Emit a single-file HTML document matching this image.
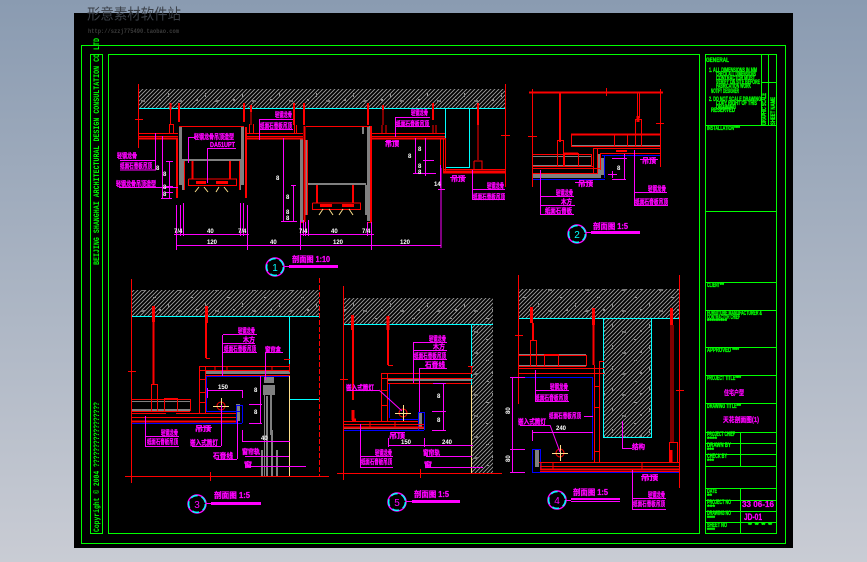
<!DOCTYPE html>
<html lang="zh"><head><meta charset="utf-8"><title>CAD</title>
<style>
html,body{margin:0;padding:0;width:867px;height:562px;overflow:hidden;background:linear-gradient(#8a9bb1,#c9ccd4)}
svg{display:block;position:absolute;left:0;top:0}
text{font-family:"Liberation Sans","Noto Sans CJK SC",sans-serif}
.m{fill:#f0f;stroke:#f0f;stroke-width:.3px;font-size:7px;font-weight:700}
.w{fill:#fff;font-size:6px;font-weight:700}
.g{fill:#0f0;stroke:#0f0;stroke-width:.3px;font-size:6px;font-weight:700}
.t{fill:#f0f;stroke:#f0f;stroke-width:.3px;font-size:8px;font-weight:700}
.s{fill:#0f0;font-family:"Liberation Mono",monospace;font-size:8px;font-weight:700}
.p{fill:#f0f;stroke:#f0f;stroke-width:.25px;font-weight:700}
path,rect,line{shape-rendering:crispEdges}
</style></head><body>
<svg width="867" height="562" viewBox="0 0 867 562" xmlns="http://www.w3.org/2000/svg">
<defs>
<pattern id="h" width="4" height="4" patternUnits="userSpaceOnUse"><rect width="4" height="4" fill="#000"/><path d="M0 4L4 0M-1 1L1 -1M3 5L5 3" stroke="#8a8a8a" stroke-width="1" fill="none"/></pattern>
<pattern id="sp" width="37" height="21" patternUnits="userSpaceOnUse"><rect x="5" y="3" width="3" height="1" fill="#8a8a8a"/><rect x="20" y="9" width="1" height="4" fill="#8a8a8a"/><rect x="30" y="16" width="4" height="2" fill="#777"/><rect x="11" y="15" width="2" height="2" fill="#8a8a8a"/></pattern>
</defs>
<rect x="74" y="13" width="719" height="535" fill="#000"/>

<!-- hatches -->
<g>
<rect x="139" y="89" width="366" height="19" fill="url(#h)"/><rect x="139" y="89" width="366" height="19" fill="url(#sp)"/>
<rect x="132" y="290" width="187" height="26" fill="url(#h)"/><rect x="132" y="290" width="187" height="26" fill="url(#sp)"/>
<rect x="344" y="298" width="149" height="26" fill="url(#h)"/><rect x="344" y="298" width="149" height="26" fill="url(#sp)"/>
<rect x="472" y="324" width="21" height="149" fill="url(#h)"/><rect x="472" y="324" width="21" height="149" fill="url(#sp)"/>
<rect x="519" y="289" width="160" height="29" fill="url(#h)"/><rect x="519" y="289" width="160" height="29" fill="url(#sp)"/>
<rect x="604" y="318" width="47" height="119" fill="url(#h)"/><rect x="604" y="318" width="47" height="119" fill="url(#sp)"/>
</g>

<!-- green frames -->
<g fill="none" stroke="#0f0" stroke-width="1">
<path d="M81.5 45.5H785.5V543.5H81.5Z"/>
<path d="M90.5 54.5H102.5V533.5H90.5Z"/>
<path d="M108.5 54.5H699.5V533.5H108.5Z"/>
<path d="M705.5 54.5H776.5V533.5H705.5Z"/>
<path d="M761.5 54.5V125M768.5 54.5V125M761.5 82.5H776.5M705.5 125.5H776.5M705.5 211.5H776.5M705.5 282.5H776.5M705.5 310.5H776.5M705.5 347.5H776.5M705.5 375.5H776.5M705.5 403.5H776.5M705.5 432.5H776.5M705.5 443.5H776.5M705.5 454.5H776.5M705.5 466.5H776.5M705.5 488.5H776.5M705.5 500.5H776.5M705.5 511.5H776.5M705.5 522.5H776.5M740.5 432V466M740.5 488V533"/>
</g>

<!-- grey parts -->
<g fill="#808080">
<rect x="179" y="127" width="3" height="58"/><rect x="182" y="160" width="2" height="30"/><rect x="182" y="159" width="61" height="2"/><rect x="241" y="127" width="3" height="58"/><rect x="239" y="160" width="2" height="30"/><rect x="245" y="138" width="2" height="60"/>
<rect x="300" y="138" width="3" height="84"/><rect x="305" y="140" width="2" height="75"/><rect x="306" y="183" width="60" height="2"/><rect x="365" y="185" width="2" height="30"/><rect x="367" y="126" width="3" height="95"/><rect x="362" y="126" width="2" height="8"/>
<rect x="533" y="174" width="68" height="4"/><rect x="598" y="154" width="3" height="21"/><rect x="601" y="158" width="3" height="17"/>
<rect x="571" y="145" width="89" height="1"/><rect x="533" y="156" width="58" height="1"/><rect x="533" y="165" width="58" height="1"/>
<rect x="205" y="371" width="85" height="3"/><rect x="132" y="401" width="58" height="1"/><rect x="132" y="409" width="58" height="2"/>
<rect x="264" y="375" width="10" height="8"/><rect x="263" y="385" width="12" height="10"/><rect x="236" y="404" width="4" height="17"/>
<rect x="264" y="395" width="1" height="81"/><rect x="270" y="395" width="2" height="40"/><rect x="261" y="450" width="2" height="26"/><rect x="266" y="396" width="2" height="80"/><rect x="271" y="430" width="2" height="46"/><rect x="276" y="450" width="2" height="26"/>
<rect x="387" y="379" width="85" height="2"/><rect x="418" y="412" width="4" height="16"/>
<rect x="519" y="354" width="67" height="2"/><rect x="519" y="365" width="67" height="1"/><rect x="535" y="449" width="4" height="18"/>
<rect x="344" y="428" width="80" height="1"/>
</g>

<!-- blue -->
<g fill="none" stroke="#0000ff" stroke-width="1">
<path d="M533 179.5H605M604.5 155V178M602 155.5H660"/>
<path d="M132 423.5H242M206.5 376V411M206 411.5H240M206 376.5H290M236.5 405V423M242.5 405V423M236 405.5H243"/>
<path d="M390 383.5H471M389.5 383V418M390 419.5H418M418.5 412V430M424.5 412V430M418 412.5H424M344 430.5H424"/>
<path d="M519 377.5H593M592.5 377V460M532.5 449V472M540.5 449V470M532 449.5H540M532 472.5H680"/>
</g>

<!-- cyan -->
<g fill="none" stroke="#0ff" stroke-width="1">
<path d="M139 108.5H505M445.5 108V167M469.5 108V167M446 167.5H470"/>
<path d="M132 316.5H319M289.5 316V372M290 399.5H319"/>
<path d="M344 324.5H493M471.5 324V385"/>
<path d="M519 318.5H679M603.5 318V437.5H651.5V318"/>
</g>
<path d="M289.5 376V476M471.5 385V473" stroke="#ffe08a" fill="none"/>

<!-- red 1px -->
<g fill="none" stroke="#f00" stroke-width="1">
<path d="M138.5 84V148M135 119.5H143M139 133.5H178M139 136.5H178M170.5 110V125M169.5 124V134M173.5 124V134M169 124.5H174"/>
<path d="M179 126.5H244M184.5 161V190M239.5 161V190"/>
<path d="M188.5 179V185.5H236.5V179H188.5"/>
<path d="M251 112V125M249.5 124V134M253.5 124V134M246 133.5H303M246 136.5H303M294.5 125V134M296.5 125V134"/>
<path d="M306 126.5H369M307.5 140V215M300 222.5H304M312.5 203V209.5H360.5V203H312.5"/>
<path d="M367 222.5H372M370 133.5H445M370 136.5H445M383 110V125M382 125V134M386 125V134M433 125V134M436 125V134M440.5 138V170M443.5 138V172M445.5 138V172"/>
<path d="M443 169.5H505M443 171H505M478 125V160M474 161H482V170M474 161V170M505.5 84V187M501 135.5H510"/>
<path d="M532.5 89V187M528 136.5H537M660.5 89V167M656 123.5H664M606.5 88V96M637.5 92V118M639.5 92V118"/>
<path d="M557.5 140V166M563.5 140V166M557 140.5H564M635.5 119V147M641.5 119V147M635 119.5H642"/>
<path d="M571.5 134V146M571 146.5H660M614.5 134V146M627.5 134V146M532 154.5H592M532 166.5H593M591.5 154V166M564.5 153V166M578.5 153V166"/>
<path d="M533 168.5H600M533 173.5H598M593.5 148V173M597.5 148V173M594 148.5H660M600 153.5H660M600.5 153V170"/>
<path d="M131.5 279V483M128 371.5H136M125 476.5H329M210.5 472V481"/>
<path d="M319.5 278V476" stroke-dasharray="5 2"/>
<path d="M151.5 384V411M157.5 384V411M151 384.5H158M132 399.5H190M132 411.5H190M190.5 399V411M164.5 398V412M177.5 398V412M164 398.5H178"/>
<path d="M132 413.5H166M176 413.5H236M132 417.5H236"/>
<path d="M199.5 366V414M205.5 366V414M199 366.5H290M199 370.5H290M205 375.5H290M199 379.5H205M199 392.5H205M199 402.5H205M289.5 364V372M215 366V370M227 366V370M272 366V370M206 358.5H210M284 359.5H290"/>
<circle cx="221" cy="406" r="4" stroke="#f00"/>
<path d="M343.5 286V480M340 379.5H348M337 473.5H502M420.5 469V478"/>
<path d="M381.5 373V421M387.5 373V421M381 373.5H472M381 378.5H472M387 383.5H471M381 390.5H387M381 405.5H387M388 365.5H393M468 366.5H473M471.5 366V373"/>
<path d="M344 421.5H418M344 424.5H424M370 421V428M395 421V428"/>
<circle cx="403" cy="413" r="4" stroke="#f00"/>
<path d="M518.5 275V404M515 335.5H523M679.5 275V488M676 390.5H684"/>
<path d="M530.5 340V366M536.5 340V366M530 340.5H537M519 355.5H586M519 366.5H586M586.5 355V366M544.5 354V367M558.5 354V367M544 354.5H559"/>
<path d="M519 368.5H604M519 373.5H604M594.5 365V463M599.5 361V463M594 386.5H599M594 407.5H599M594 451.5H599M599 361.5H604"/>
<path d="M671 325V442M673 325V442M669.5 442V463M677.5 442V463M669 442.5H678"/>
<path d="M539 462.5H680M540 466.5H680M540 471.5H680M541 463V469M553 463V469M642 463V469"/>
<circle cx="560" cy="453" r="4" stroke="#f00"/>
</g>

<!-- red thick -->
<g fill="none" stroke="#f00" stroke-width="2">
<path d="M177 138V198M246 127V198M304.5 126V222M371 126V223"/>
<path d="M139 138.5H178M170.5 103V110M179 103V122M244 103V122M251 105V112M294 103V125M304 103V125M368 103V125M383 105V110M433 103V120M478 103V125M246 138.5H303M370 138.5H445M443 172.5H505"/>
<path d="M529 92.5H663M560 92V142M571 134.5H660M564 153.5H578M614 134.5H628M616 151H627M192.5 161V179M230 161V179M317 185V203M353 185V203"/>
<path d="M206 323V358M153.5 322V385M132 421.5H236M353 330V400M388 330V365M344 427.5H424M533 323V340M593.5 325V365M540 469.5H680"/>
</g>
<g fill="none" stroke="#f00" stroke-width="3">
<path d="M153.5 306V322M206.5 306V323M352.5 315V330M388 316V330M531.5 307V323M593.5 308V325M671.5 308V325M638 116V122M196 182.5H206M216 182.5H228M320 205.5H332M342 205.5H354M353 410V420M356 420H352M671 450V463"/>
</g>

<!-- yellow -->
<g fill="none" stroke="#ffe08a" stroke-width="1">
<path d="M213 406.5H229M221.5 398V414M395 413.5H411M403.5 405V421M552 453.5H568M560.5 445V461"/>
<path d="M199 187L195 192M204 187L208 192M219 187L216 192M224 187L228 192M323 209L319 215M329 209L333 215M343 209L339 215M349 209L353 215" style="shape-rendering:auto"/>
</g>

<!-- magenta lines -->
<g fill="none" stroke="#f0f" stroke-width="1">
<path d="M155.5 133V170H120M120 160.5H156M119 187.5H178M162.5 136V198M169.5 161V199M166 161.5H173M166 186.5H173M166 192.5H173M161 198.5H172"/>
<path d="M188.5 137V163M188 137.5H195M207 148.5H236M207.5 148V183"/>
<path d="M174 234.5H249M300 234.5H374M176 245.5H441M176.5 205V250M180.5 205V236M183.5 203V236M240.5 203V236M243.5 203V236M247.5 205V250M300.5 220V250M303.5 220V236M305.5 222V236M308.5 220V236M371.5 222V250M367.5 222V236M441 168V248"/>
<path d="M259.5 119V140M259 119.5H293M259 129.5H293M283.5 138V221M281 221.5H297M293.5 185V222M291 185.5H296"/>
<path d="M395.5 117V137M395 117.5H430M395 126.5H430M415.5 138V174M425.5 138V176M423 160.5H434M413 173.5H436M385 141.5H399"/>
<path d="M472.5 170V200M472 189.5H505M472 199.5H505M450 177.5H466M438 189.5H445M440.5 165V188"/>
<path d="M634.5 150V205M635 192.5H667M634 205.5H668M540.5 170V215M540 196.5H574M540 205.5H575M540 214.5H574M624.5 154V179M612 158.5H627M612 179.5H626M575 182.5H593M640 159.5H658"/>
<path d="M608 174.5H617M612.5 171V178"/>
<path d="M586 232.5H591"/>
<path d="M222.5 335V376M223 334.5H257M223 343.5H255M223 352.5H257M265 352.5H283M265.5 352V380"/>
<path d="M208 390.5H243M207.5 388V398M242.5 390V398M260.5 376V424M249 404.5H262M249 423.5H262M242 441.5H290M242.5 430V442M245 456.5H289M247 466.5H306"/>
<path d="M145.5 416V447M146 436.5H179M146 446.5H179M192 446.5H221M221.5 405V446M216 459.5H237M237.5 420V459M198 427.5H212"/>
<path d="M413.5 342V383M413 342.5H447M413 350.5H447M413 359.5H447M419 368.5H447M419.5 368V412M347 390.5H379"/>
<path d="M443.5 383V431M433 383.5H446M432 411.5H446M432 430.5H446M388 445.5H473M388.5 438V447M424.5 438V447M426 456.5H472M426 467.5H483"/>
<path d="M360.5 424V467M360 456.5H393M360 467.5H393M391 432.5H405"/>
<path d="M379 390L402 411" style="shape-rendering:auto"/>
<path d="M512.5 378V473M510 377.5H525M510 449.5H525M510 472.5H525M535.5 370V402M535 390.5H569M535 401.5H569M584 416.5H593M520 425.5H550M532 432.5H593M532.5 430V441"/>
<path d="M550 425L560 452" style="shape-rendering:auto"/>
<path d="M622.5 421V448M622 448.5H632M641 476.5H658M632.5 470V509M632 498.5H666M632 509.5H666"/>
</g>
<g fill="#f0f">
<rect x="289" y="265" width="49" height="3"/><rect x="591" y="231" width="49" height="3"/><rect x="211" y="502" width="50" height="3"/><rect x="412" y="500" width="48" height="3"/><rect x="571" y="498" width="49" height="2"/><rect x="571" y="501" width="49" height="1"/>
<rect x="284" y="266" width="5" height="1"/><rect x="206" y="503" width="5" height="1"/><rect x="406" y="501" width="6" height="1"/><rect x="566" y="500" width="5" height="1"/>
</g>

<!-- bubbles -->
<g fill="none" stroke-width="1.5" style="shape-rendering:auto">
<circle cx="275" cy="267" r="9" stroke="#f0f"/><circle cx="275" cy="267" r="8.4" stroke="#0ff" stroke-dasharray="7 4"/>
<circle cx="577" cy="234" r="9" stroke="#f0f"/><circle cx="577" cy="234" r="8.4" stroke="#0ff" stroke-dasharray="7 4"/>
<circle cx="197" cy="504" r="9" stroke="#f0f"/><circle cx="197" cy="504" r="8.4" stroke="#0ff" stroke-dasharray="7 4"/>
<circle cx="397" cy="502" r="9" stroke="#f0f"/><circle cx="397" cy="502" r="8.4" stroke="#0ff" stroke-dasharray="7 4"/>
<circle cx="557" cy="500" r="9" stroke="#f0f"/><circle cx="557" cy="500" r="8.4" stroke="#0ff" stroke-dasharray="7 4"/>
</g>
<g font-size="10" text-anchor="middle">
<text x="275" y="271" fill="#0ff">1</text><text x="577" y="238" fill="#0ff">2</text><text x="197" y="508" fill="#f0f">3</text><text x="397" y="506" fill="#f0f">5</text><text x="557" y="504" fill="#f0f">4</text>
</g>

<!-- magenta text -->
<g>
<text class="m" x="117" y="158" textLength="20" lengthAdjust="spacingAndGlyphs">轻钢龙骨</text>
<text class="m" x="120" y="168" textLength="32" lengthAdjust="spacingAndGlyphs">纸面石膏板吊顶</text>
<text class="m" x="116" y="186" textLength="40" lengthAdjust="spacingAndGlyphs">轻钢龙骨吊顶造型</text>
<text class="m" x="194" y="139" textLength="40" lengthAdjust="spacingAndGlyphs">轻钢龙骨吊顶造型</text>
<text class="m" x="210" y="147" textLength="25" lengthAdjust="spacingAndGlyphs">DA51UPT</text>
<text class="m" x="275" y="117" textLength="17" lengthAdjust="spacingAndGlyphs">轻钢龙骨</text>
<text class="m" x="260" y="128" textLength="32" lengthAdjust="spacingAndGlyphs">纸面石膏板吊顶</text>
<text class="m" x="411" y="115" textLength="17" lengthAdjust="spacingAndGlyphs">轻钢龙骨</text>
<text class="m" x="396" y="126" textLength="33" lengthAdjust="spacingAndGlyphs">纸面石膏板吊顶</text>
<text class="m" x="487" y="188" textLength="17" lengthAdjust="spacingAndGlyphs">轻钢龙骨</text>
<text class="m" x="473" y="199" textLength="32" lengthAdjust="spacingAndGlyphs">纸面石膏板吊顶</text>
<text class="m" x="385" y="146" textLength="14" lengthAdjust="spacingAndGlyphs">吊顶</text>
<text class="m" x="451" y="181" textLength="14" lengthAdjust="spacingAndGlyphs">吊顶</text>
<text class="t" x="292" y="262" textLength="38" lengthAdjust="spacingAndGlyphs">剖面图 1:10</text>

<text class="m" x="556" y="195" textLength="17" lengthAdjust="spacingAndGlyphs">轻钢龙骨</text>
<text class="m" x="561" y="204" textLength="11" lengthAdjust="spacingAndGlyphs">木方</text>
<text class="m" x="545" y="213" textLength="27" lengthAdjust="spacingAndGlyphs">纸面石膏板</text>
<text class="m" x="648" y="191" textLength="18" lengthAdjust="spacingAndGlyphs">轻钢龙骨</text>
<text class="m" x="635" y="204" textLength="33" lengthAdjust="spacingAndGlyphs">纸面石膏板吊顶</text>
<text class="m" x="578" y="186" textLength="15" lengthAdjust="spacingAndGlyphs">吊顶</text>
<text class="m" x="642" y="163" textLength="14" lengthAdjust="spacingAndGlyphs">吊顶</text>
<text class="t" x="593" y="229" textLength="35" lengthAdjust="spacingAndGlyphs">剖面图 1:5</text>

<text class="m" x="238" y="333" textLength="17" lengthAdjust="spacingAndGlyphs">轻钢龙骨</text>
<text class="m" x="243" y="342" textLength="12" lengthAdjust="spacingAndGlyphs">木方</text>
<text class="m" x="224" y="351" textLength="32" lengthAdjust="spacingAndGlyphs">纸面石膏板吊顶</text>
<text class="m" x="265" y="352" textLength="16" lengthAdjust="spacingAndGlyphs">窗帘盒</text>
<text class="m" x="161" y="435" textLength="17" lengthAdjust="spacingAndGlyphs">轻钢龙骨</text>
<text class="m" x="147" y="444" textLength="31" lengthAdjust="spacingAndGlyphs">纸面石膏板吊顶</text>
<text class="m" x="190" y="445" textLength="28" lengthAdjust="spacingAndGlyphs">嵌入式筒灯</text>
<text class="m" x="213" y="458" textLength="20" lengthAdjust="spacingAndGlyphs">石膏线</text>
<text class="m" x="195" y="431" textLength="16" lengthAdjust="spacingAndGlyphs">吊顶</text>
<text class="m" x="242" y="454" textLength="18" lengthAdjust="spacingAndGlyphs">窗帘轨</text>
<text class="m" x="244" y="467" textLength="8" lengthAdjust="spacingAndGlyphs">窗</text>
<text class="t" x="214" y="498" textLength="36" lengthAdjust="spacingAndGlyphs">剖面图 1:5</text>

<text class="m" x="429" y="341" textLength="17" lengthAdjust="spacingAndGlyphs">轻钢龙骨</text>
<text class="m" x="433" y="349" textLength="12" lengthAdjust="spacingAndGlyphs">木方</text>
<text class="m" x="414" y="358" textLength="32" lengthAdjust="spacingAndGlyphs">纸面石膏板吊顶</text>
<text class="m" x="425" y="367" textLength="20" lengthAdjust="spacingAndGlyphs">石膏线</text>
<text class="m" x="346" y="390" textLength="28" lengthAdjust="spacingAndGlyphs">嵌入式筒灯</text>
<text class="m" x="423" y="455" textLength="17" lengthAdjust="spacingAndGlyphs">窗帘轨</text>
<text class="m" x="424" y="467" textLength="8" lengthAdjust="spacingAndGlyphs">窗</text>
<text class="m" x="375" y="455" textLength="17" lengthAdjust="spacingAndGlyphs">轻钢龙骨</text>
<text class="m" x="361" y="464" textLength="31" lengthAdjust="spacingAndGlyphs">纸面石膏板吊顶</text>
<text class="m" x="389" y="438" textLength="16" lengthAdjust="spacingAndGlyphs">吊顶</text>
<text class="t" x="414" y="497" textLength="35" lengthAdjust="spacingAndGlyphs">剖面图 1:5</text>

<text class="m" x="550" y="389" textLength="18" lengthAdjust="spacingAndGlyphs">轻钢龙骨</text>
<text class="m" x="535" y="400" textLength="33" lengthAdjust="spacingAndGlyphs">纸面石膏板吊顶</text>
<text class="m" x="549" y="418" textLength="32" lengthAdjust="spacingAndGlyphs">纸面石膏板吊顶</text>
<text class="m" x="518" y="424" textLength="28" lengthAdjust="spacingAndGlyphs">嵌入式筒灯</text>
<text class="m" x="632" y="449" textLength="13" lengthAdjust="spacingAndGlyphs">结构</text>
<text class="m" x="641" y="480" textLength="17" lengthAdjust="spacingAndGlyphs">吊顶</text>
<text class="m" x="648" y="497" textLength="17" lengthAdjust="spacingAndGlyphs">轻钢龙骨</text>
<text class="m" x="633" y="506" textLength="32" lengthAdjust="spacingAndGlyphs">纸面石膏板吊顶</text>
<text class="t" x="573" y="495" textLength="35" lengthAdjust="spacingAndGlyphs">剖面图 1:5</text>
</g>

<!-- white marks -->
<g>
<text class="w" x="156" y="170">8</text><text class="w" x="163" y="176">8</text><text class="w" x="163" y="189">8</text><text class="w" x="163" y="196">8</text>
<text class="w" x="207" y="233">40</text><text class="w" x="174" y="233">7/4</text><text class="w" x="238" y="233">7/4</text><text class="w" x="207" y="244">120</text><text class="w" x="270" y="244">40</text><text class="w" x="299" y="233">7/4</text><text class="w" x="362" y="233">7/4</text><text class="w" x="331" y="233">40</text><text class="w" x="333" y="244">120</text><text class="w" x="400" y="244">120</text>
<text class="w" x="276" y="180">8</text><text class="w" x="286" y="199">8</text><text class="w" x="286" y="214">8</text><text class="w" x="286" y="220">8</text><text class="w" x="408" y="158">8</text><text class="w" x="418" y="151">8</text><text class="w" x="418" y="168">8</text><text class="w" x="418" y="174">8</text>
<text class="w" x="434" y="186">14</text>
<text class="w" x="617" y="170">8</text>
<text class="w" x="218" y="389">150</text><text class="w" x="254" y="392">8</text><text class="w" x="254" y="414">8</text><text class="w" x="261" y="440">40</text>
<text class="w" x="437" y="398">8</text><text class="w" x="437" y="422">8</text><text class="w" x="401" y="444">150</text><text class="w" x="442" y="444">240</text>
<text class="w" x="556" y="430">240</text><text class="w" transform="translate(510,414) rotate(-90)" x="0" y="0">80</text><text class="w" transform="translate(510,462) rotate(-90)" x="0" y="0">80</text>
</g>

<!-- strip text -->
<text class="s" transform="translate(99,265) rotate(-90)" x="0" y="0" textLength="227" lengthAdjust="spacingAndGlyphs">BEIJING SHANGHAI ARCHITECTURAL DESIGN CONSULTATION CO LTD</text>
<text class="s" transform="translate(99,532) rotate(-90)" x="0" y="0" textLength="130" lengthAdjust="spacingAndGlyphs">Copyright © 2004 ?????????????????</text>

<!-- title block text -->
<g>
<text class="g" x="706" y="62" textLength="23" lengthAdjust="spacingAndGlyphs">GENERAL</text>
<text class="g" x="709" y="72" textLength="48" lengthAdjust="spacingAndGlyphs">1. ALL DIMENSIONS IN MM</text>
<text class="g" x="716" y="76" textLength="40" lengthAdjust="spacingAndGlyphs">CHECK ALL DIMENSIONS</text>
<text class="g" x="716" y="80" textLength="39" lengthAdjust="spacingAndGlyphs">CONTRACTOR MUST</text>
<text class="g" x="716" y="84" textLength="44" lengthAdjust="spacingAndGlyphs">VERIFY ON SITE BEFORE</text>
<text class="g" x="716" y="88" textLength="35" lengthAdjust="spacingAndGlyphs">FABRICATION WORK</text>
<text class="g" x="711" y="93" textLength="28" lengthAdjust="spacingAndGlyphs">NOTIFY DESIGNER</text>
<text class="g" x="709" y="101" textLength="52" lengthAdjust="spacingAndGlyphs">2. DO NOT SCALE DRAWING</text>
<text class="g" x="716" y="105" textLength="41" lengthAdjust="spacingAndGlyphs">COPY RIGHT OF THIS</text>
<text class="g" x="716" y="109" textLength="20" lengthAdjust="spacingAndGlyphs">DRAWING</text>
<text class="g" x="711" y="112" textLength="24" lengthAdjust="spacingAndGlyphs">RESERVED</text>
<text class="g" x="707" y="130" textLength="33" lengthAdjust="spacingAndGlyphs">INSTALLATION****</text>
<text class="g" transform="translate(766,125) rotate(-90)" x="0" y="0" textLength="32" lengthAdjust="spacingAndGlyphs">GRAPHIC SCALE</text>
<text class="g" transform="translate(775,125) rotate(-90)" x="0" y="0" textLength="28" lengthAdjust="spacingAndGlyphs">SHEET NAME</text>
<text class="g" x="707" y="287" textLength="17" lengthAdjust="spacingAndGlyphs">CLIENT***</text>
<text class="g" x="707" y="315" textLength="55" lengthAdjust="spacingAndGlyphs">FURNITURE MANUFACTURER &amp;</text>
<text class="g" x="707" y="319" textLength="33" lengthAdjust="spacingAndGlyphs">CONTRACTOR CHIEF</text>
<text class="g" x="707" y="323" textLength="20" lengthAdjust="spacingAndGlyphs">*********</text>
<text class="g" x="707" y="352" textLength="32" lengthAdjust="spacingAndGlyphs">APPROVED ****</text>
<text class="g" x="707" y="380" textLength="34" lengthAdjust="spacingAndGlyphs">PROJECT TITLE****</text>
<text class="g" x="707" y="408" textLength="34" lengthAdjust="spacingAndGlyphs">DRAWING TITLE***</text>
<text class="g" x="707" y="436" textLength="28" lengthAdjust="spacingAndGlyphs">PROJECT CHIEF</text>
<text class="g" x="707" y="441" textLength="10" lengthAdjust="spacingAndGlyphs">****</text>
<text class="g" x="707" y="447" textLength="24" lengthAdjust="spacingAndGlyphs">DRAWN BY</text>
<text class="g" x="707" y="452" textLength="7" lengthAdjust="spacingAndGlyphs">***</text>
<text class="g" x="707" y="458" textLength="20" lengthAdjust="spacingAndGlyphs">CHECK BY</text>
<text class="g" x="707" y="463" textLength="7" lengthAdjust="spacingAndGlyphs">***</text>
<text class="g" x="707" y="493" textLength="10" lengthAdjust="spacingAndGlyphs">DATE</text>
<text class="g" x="707" y="498" textLength="5" lengthAdjust="spacingAndGlyphs">**</text>
<text class="g" x="707" y="504" textLength="24" lengthAdjust="spacingAndGlyphs">PROJECT NO</text>
<text class="g" x="707" y="509" textLength="8" lengthAdjust="spacingAndGlyphs">***</text>
<text class="g" x="707" y="515" textLength="24" lengthAdjust="spacingAndGlyphs">DRAWING NO</text>
<text class="g" x="707" y="520" textLength="8" lengthAdjust="spacingAndGlyphs">****</text>
<text class="g" x="707" y="527" textLength="20" lengthAdjust="spacingAndGlyphs">SHEET NO</text>
<text class="g" x="707" y="532" textLength="8" lengthAdjust="spacingAndGlyphs">****</text>
<text class="g" x="748" y="527" textLength="24" lengthAdjust="spacingAndGlyphs">* * *  *</text>
<text class="p" x="724" y="395" font-size="7" textLength="20" lengthAdjust="spacingAndGlyphs">住宅户型</text>
<text class="p" x="723" y="422" font-size="7" textLength="36" lengthAdjust="spacingAndGlyphs">天花剖面图(1)</text>
<text class="p" x="742" y="507" font-size="8" textLength="32" lengthAdjust="spacingAndGlyphs">33 06-16</text>
<text class="p" x="744" y="520" font-size="9" textLength="18" lengthAdjust="spacingAndGlyphs">JD-01</text>
</g>

<!-- watermark -->
<text x="87" y="19" font-size="15" fill="#3a3f47" textLength="94" lengthAdjust="spacingAndGlyphs">形意素材软件站</text>
<text x="88" y="33" font-size="6" font-weight="700" fill="#3b3b3b" textLength="91" lengthAdjust="spacingAndGlyphs" style="font-family:'Liberation Mono',monospace">http://szzj775490.taobao.com</text>
</svg>
</body></html>
